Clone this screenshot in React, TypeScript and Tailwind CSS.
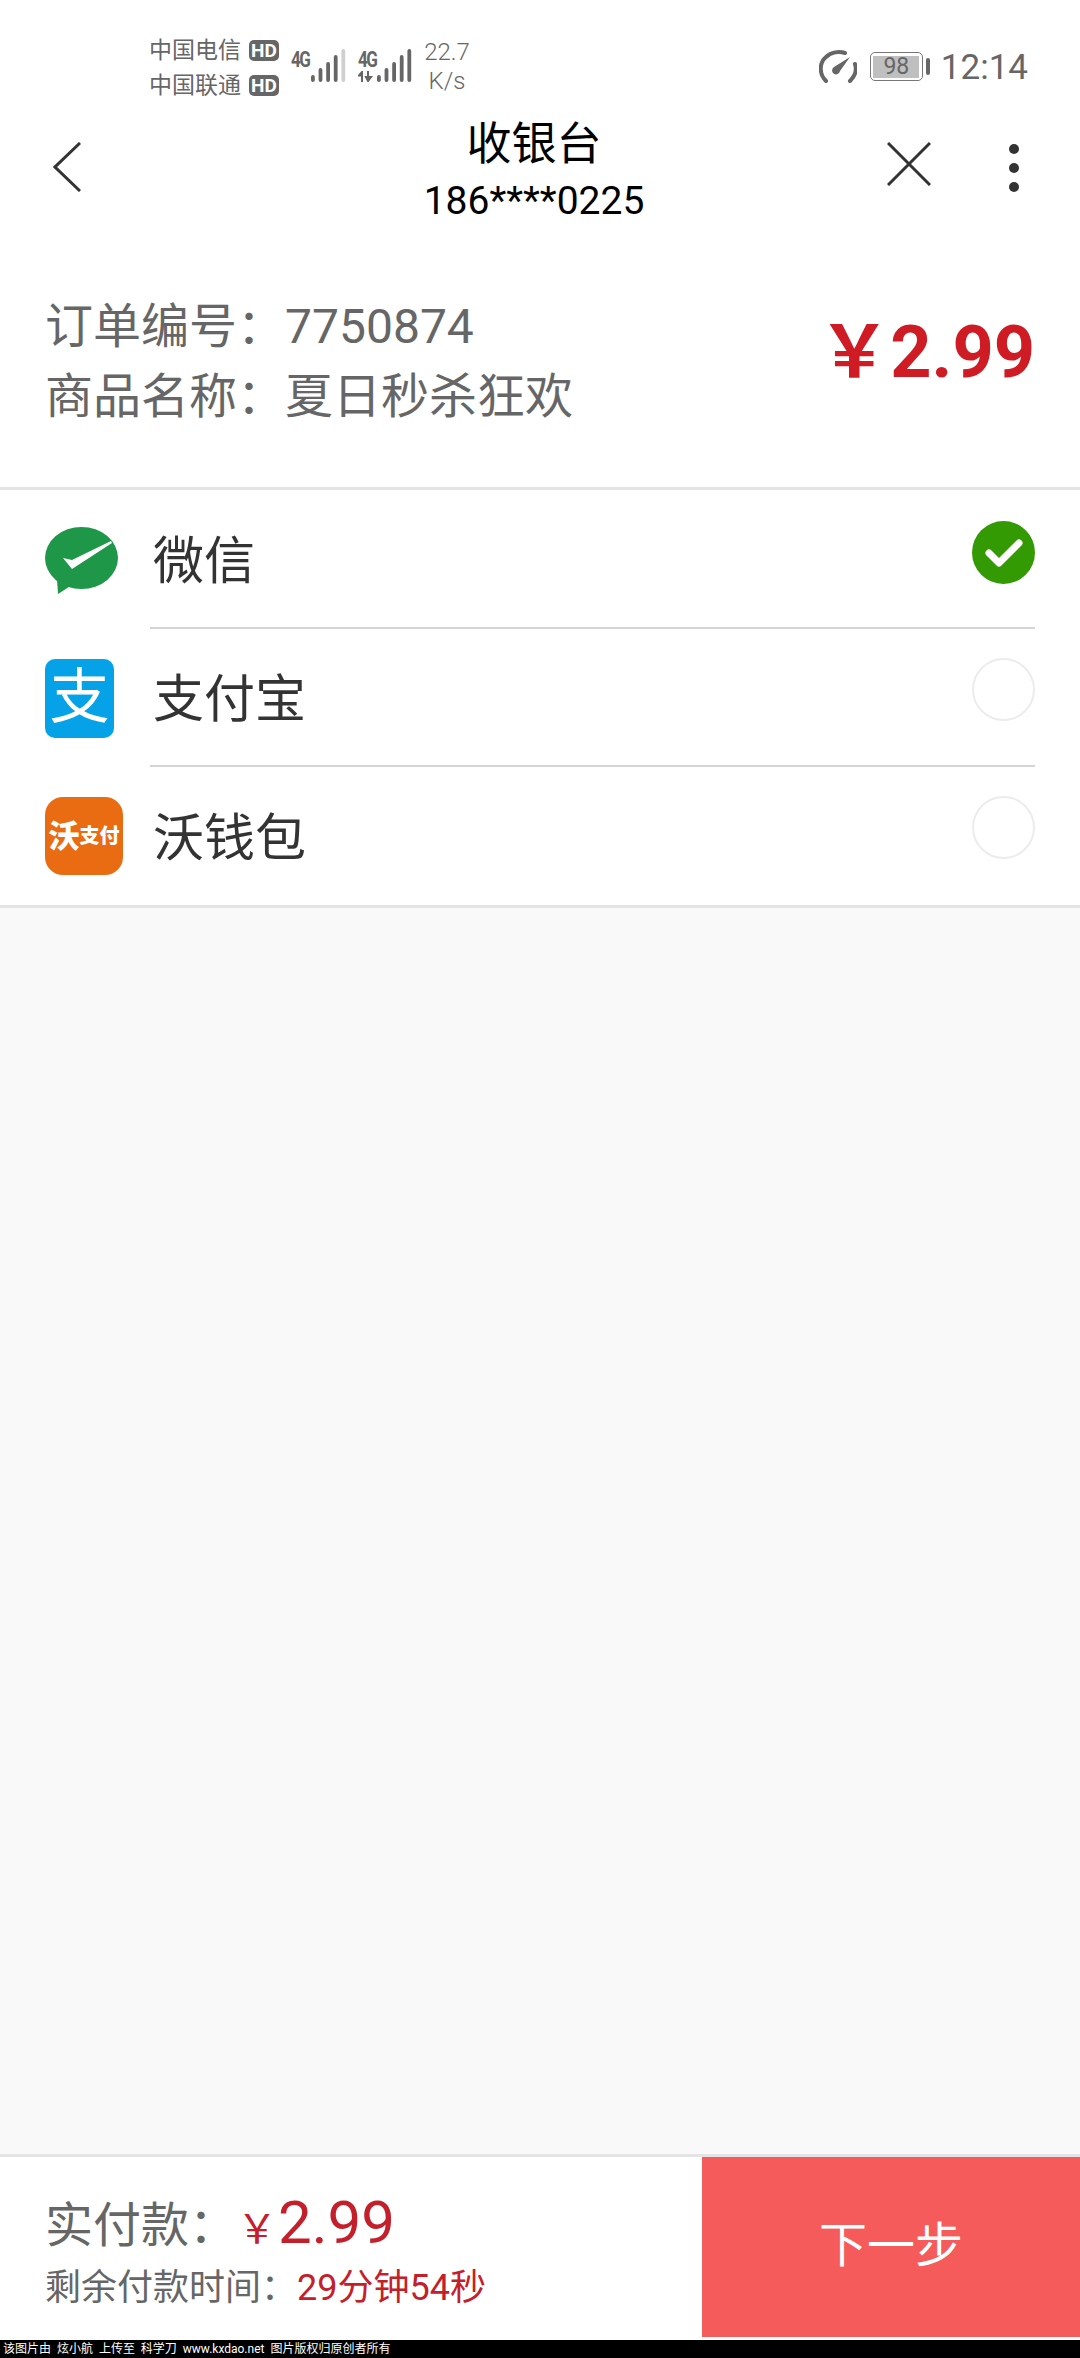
import React from "react";

const BARS = [
  { x: 0, h: 7 },
  { x: 7.6, h: 14 },
  { x: 15.2, h: 20 },
  { x: 22.8, h: 27 },
  { x: 30.4, h: 33 },
];

function Signal({ lastDim }: { lastDim?: boolean }) {
  return (
    <svg width="35" height="33" viewBox="0 0 35 33" className="block">
      {BARS.map((b, i) => (
        <rect
          key={b.x}
          x={b.x}
          y={33 - b.h}
          width="3.8"
          height={b.h}
          rx="1.9"
          fill={lastDim && i === 4 ? "#cfcfcf" : "#666666"}
        />
      ))}
    </svg>
  );
}

function HdBadge() {
  return (
    <span className="ml-[8px] flex h-[21px] w-[30px] items-center justify-center rounded-[5px] bg-[#666666] text-[19px] leading-none font-bold text-white">
      HD
    </span>
  );
}

function Gauge() {
  return (
    <svg width="38" height="33" viewBox="0 0 38 33" fill="none" className="mt-[17px] block">
      <path d="M7 31 C0 24 0 13 7 7 C12 2 20 1 26 3" stroke="#666666" strokeWidth="4" strokeLinecap="round" />
      <path d="M31 31 C36 26 38 20 36 14" stroke="#666666" strokeWidth="4" strokeLinecap="round" />
      <path d="M31 7 L21 21 A4 4 0 1 1 15 17 Z" fill="#666666" />
    </svg>
  );
}

function StatusBar() {
  return (
    <div className="flex h-[108px] items-start pt-[33px] pl-[149px] pr-[52px] text-[#666666]">
      <div className="text-[23px] leading-[35px]">
        <div className="flex items-center">
          中国电信
          <HdBadge />
        </div>
        <div className="flex items-center">
          中国联通
          <HdBadge />
        </div>
      </div>
      <div className="ml-[12px] mt-[16px] flex items-start">
        <span className="w-[18px] origin-top scale-y-[1.25] text-[17px] leading-[16px] font-bold tracking-[-1.5px]">4G</span>
        <div className="ml-[2px]">
          <Signal lastDim />
        </div>
      </div>
      <div className="ml-[12px] mt-[16px] flex items-start">
        <div className="w-[19px]">
          <span className="block origin-top scale-y-[1.25] text-[17px] leading-[16px] font-bold tracking-[-1.5px]">4G</span>
          <svg width="17" height="11" viewBox="0 0 17 11" className="mt-[6px] block">
            <path d="M4 11 V2 M1 4.5 L4 1 L4 4.5 Z" stroke="#666666" strokeWidth="2" fill="#666666" />
            <path d="M10 0 V9 M8 6 L10 10 L13 6 Z" stroke="#666666" strokeWidth="2" fill="#666666" />
          </svg>
        </div>
        <Signal />
      </div>
      <div className="ml-[12px] mt-[5px] w-[46px] text-center text-[24px] leading-[29px] font-light">
        <div>22.7</div>
        <div>K/s</div>
      </div>
      <div className="ml-auto flex items-start">
        <Gauge />
        <div className="ml-[13px] mt-[19px] flex h-[29px] w-[53px] items-center justify-center rounded-[5px] border border-[#777777]">
          <span className="flex h-[22px] w-[46px] items-center justify-center bg-[#bfbfbf] text-[23px] leading-none">98</span>
        </div>
        <span className="ml-[3px] mt-[25px] h-[17px] w-[4px] rounded-[2px] bg-[#666666]" />
        <span className="ml-[11px] mt-[17px] text-[35px] leading-[36px]">12:14</span>
      </div>
    </div>
  );
}

function Header() {
  return (
    <div className="flex h-[120px] items-start">
      <div className="w-[188px] pl-[53px] pt-[34px]">
        <svg width="28" height="50" viewBox="0 0 28 50" fill="none" className="block">
          <path d="M27 1 L2 25 L27 49" stroke="#333333" strokeWidth="3" />
        </svg>
      </div>
      <div className="flex-1 pt-[9px] text-center text-black">
        <div className="text-[45px] leading-[56px]">收银台</div>
        <div className="text-[39px] leading-[56px]">186****0225</div>
      </div>
      <div className="flex w-[200px] items-start pl-[7px] pt-[34px]">
        <svg width="44" height="44" viewBox="0 0 44 44" fill="none" className="block">
          <path d="M1 1 L43 43 M43 1 L1 43" stroke="#333333" strokeWidth="3" />
        </svg>
        <div className="ml-[78px] flex flex-col gap-[9px] pt-[2px]">
          <span className="h-[10px] w-[10px] rounded-full bg-[#333333]" />
          <span className="h-[10px] w-[10px] rounded-full bg-[#333333]" />
          <span className="h-[10px] w-[10px] rounded-full bg-[#333333]" />
        </div>
      </div>
    </div>
  );
}

function OrderSummary() {
  return (
    <div className="flex h-[262px] items-start justify-between border-b-[3px] border-[#e4e4e4] pl-[45px] pr-[45px] pt-[64px]">
      <div className="text-[48px] leading-[70px] text-[#666666]">
        <div>订单编号：7750874</div>
        <div>商品名称：夏日秒杀狂欢</div>
      </div>
      <div className="mt-[25px] text-[72px] leading-[72px] font-bold text-[#cf1c24]">￥2.99</div>
    </div>
  );
}

function WechatLogo() {
  return (
    <svg width="73" height="67" viewBox="0 0 73 67" className="block">
      <ellipse cx="36.500" cy="31" rx="36.500" ry="31" fill="#1f9748" />
      <path d="M12 52 L13 67 L27 58 Z" fill="#1f9748" />
      <path d="M18 31 L27 33 L66 14 L67 16 L27 42 Z" fill="#ffffff" />
    </svg>
  );
}

function AlipayLogo() {
  return (
    <span className="flex h-[79px] w-[69px] items-center justify-center rounded-[10px] bg-[#06a2e8] text-[60px] leading-none text-white">
      支
    </span>
  );
}

function WoLogo() {
  return (
    <span className="flex h-[78px] w-[78px] items-center justify-center rounded-[18px] bg-[#e96c13] font-black text-white">
      <span className="text-[31px] leading-none">沃</span>
      <span className="text-[20px] leading-none">支付</span>
    </span>
  );
}

function Radio({ checked }: { checked?: boolean }) {
  if (checked) {
    return (
      <span className="mt-[29px] flex h-[63px] w-[63px] items-center justify-center rounded-full bg-[#339a03]">
        <svg width="38" height="30" viewBox="0 0 38 30" fill="none" className="block">
          <path d="M4 15 L14 25 L34 5" stroke="#ffffff" strokeWidth="7" strokeLinecap="round" strokeLinejoin="round" />
        </svg>
      </span>
    );
  }
  return <span className="mt-[29px] h-[63px] w-[63px] rounded-full border-2 border-[#ececec]" />;
}

function PayRow({
  logo,
  label,
  checked,
  divider,
  height,
}: {
  logo: React.ReactNode;
  label: string;
  checked?: boolean;
  divider?: boolean;
  height: string;
}) {
  return (
    <div className={`flex ${height} pl-[45px] pr-[45px]`}>
      <div className="flex w-[105px] items-center">{logo}</div>
      <div className={`flex flex-1 items-start justify-between ${divider ? "border-b-2 border-[#d4d4d4]" : ""}`}>
        <span className="mt-[4px] self-center pl-[3px] text-[51px] leading-none text-[#333333]">{label}</span>
        <Radio checked={checked} />
      </div>
    </div>
  );
}

function Footer() {
  return (
    <div className="border-t-[3px] border-[#e4e4e4] bg-white">
      <div className="flex h-[183px] items-start">
        <div className="flex-1 pl-[45px] pt-[39px] text-[#666666]">
          <div className="flex h-[60px] items-center text-[48px] leading-[60px]">
            实付款：
            <span className="text-[#c4202c]">
              <span className="text-[40px]">￥</span>
              <span className="ml-[1px] text-[60px]">2.99</span>
            </span>
          </div>
          <div className="pt-[2px] text-[36px] leading-[60px]">
            剩余付款时间：<span className="text-[#c4202c]">29分钟54秒</span>
          </div>
        </div>
        <div className="flex h-[180px] w-[378px] items-center justify-center bg-[#f55b5b] pb-[3px] text-[48px] leading-none text-white">
          下一步
        </div>
      </div>
    </div>
  );
}

export default function App() {
  return (
    <div className="flex h-[2358px] w-[1080px] flex-col overflow-hidden bg-white font-['Roboto','Noto_Sans_CJK_SC',sans-serif]">
      <StatusBar />
      <Header />
      <OrderSummary />
      <div className="bg-white pt-[2px]">
        <PayRow height="h-[137px]" logo={<WechatLogo />} label="微信" checked divider />
        <PayRow height="h-[138px]" logo={<AlipayLogo />} label="支付宝" divider />
        <PayRow height="h-[138px]" logo={<WoLogo />} label="沃钱包" />
      </div>
      <div className="flex-1 border-t-[3px] border-[#e4e4e4] bg-[#f9f9f9]" />
      <Footer />
      <div className="h-[18px] bg-black pl-[3px] text-[12px] leading-[18px] whitespace-pre text-white">
        该图片由  炫小航  上传至  科学刀  www.kxdao.net  图片版权归原创者所有
      </div>
    </div>
  );
}
